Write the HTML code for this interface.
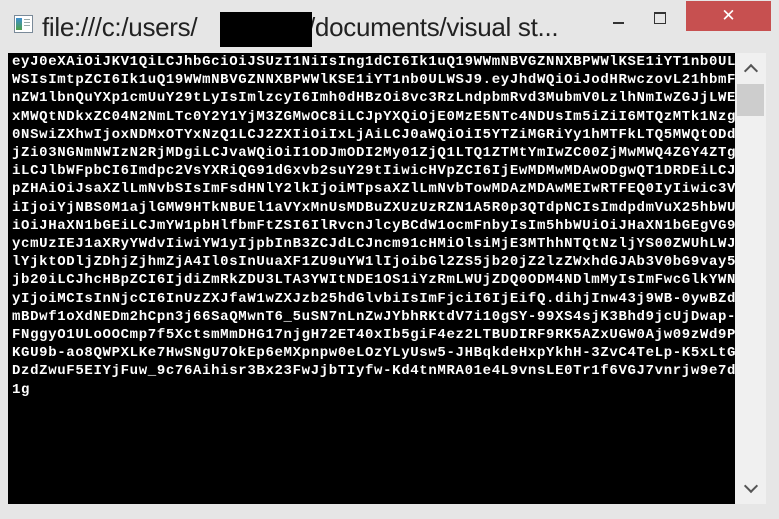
<!DOCTYPE html>
<html><head><meta charset="utf-8"><style>
html,body{margin:0;padding:0;}
body{width:779px;height:519px;background:#e6e6e6;position:relative;overflow:hidden;font-family:"Liberation Sans",sans-serif;}
.title{position:absolute;top:10px;font-size:26px;color:#222;white-space:nowrap;line-height:34px;}
.redact{position:absolute;left:220px;top:12px;width:92px;height:35px;background:#000;}
.icon{position:absolute;left:14px;top:15px;width:17px;height:16px;background:#fff;border:1px solid #7a8a99;}
.icon:before{content:"";position:absolute;left:1px;top:2px;width:6px;height:12px;background:linear-gradient(#3f8fd0,#4da04a);}
.icon:after{content:"";position:absolute;left:9px;top:3px;width:6px;height:9px;background:repeating-linear-gradient(#9aa 0 1px,transparent 1px 3px);}
.min{position:absolute;left:613px;top:22px;width:11px;height:2px;background:#333;}
.max{position:absolute;left:654px;top:12px;width:10px;height:9px;border:1.5px solid #333;border-top-width:2px;}
.close{position:absolute;left:686px;top:1px;width:85px;height:30px;background:#c75050;color:#fff;font-size:17px;text-align:center;line-height:30px;}
.con{position:absolute;left:8px;top:53px;width:727px;height:451px;background:#000;overflow:hidden;}
pre{margin:0;padding:0 0 0 4px;font-family:"Liberation Mono",monospace;font-weight:bold;font-size:14px;letter-spacing:0.65px;line-height:18.2px;color:#fff;}
.sb{position:absolute;left:735px;top:53px;width:31px;height:451px;background:#f0f0f0;}
.thumb{position:absolute;left:2px;top:31px;width:27px;height:32px;background:#cdcdcd;}
.ar{position:absolute;left:11px;width:8px;height:8px;border-left:2.5px solid #555;border-top:2.5px solid #555;}
</style></head><body>
<div class="icon"></div>
<div class="title" style="left:42px;letter-spacing:-0.3px">file:///c:/users/</div>
<div class="title" style="left:308px;letter-spacing:-0.3px">/documents/visual st...</div>
<div class="redact"></div>
<div class="min"></div>
<div class="max"></div>
<div class="close">✕</div>
<div class="con"><pre>eyJ0eXAiOiJKV1QiLCJhbGciOiJSUzI1NiIsIng1dCI6Ik1uQ19WWmNBVGZNNXBPWWlKSE1iYT1nb0UL
WSIsImtpZCI6Ik1uQ19WWmNBVGZNNXBPWWlKSE1iYT1nb0ULWSJ9.eyJhdWQiOiJodHRwczovL21hbmF
nZW1lbnQuYXp1cmUuY29tLyIsImlzcyI6Imh0dHBzOi8vc3RzLndpbmRvd3MubmV0LzlhNmIwZGJjLWE
xMWQtNDkxZC04N2NmLTc0Y2Y1YjM3ZGMwOC8iLCJpYXQiOjE0MzE5NTc4NDUsIm5iZiI6MTQzMTk1Nzg
0NSwiZXhwIjoxNDMxOTYxNzQ1LCJ2ZXIiOiIxLjAiLCJ0aWQiOiI5YTZiMGRiYy1hMTFkLTQ5MWQtODd
jZi03NGNmNWIzN2RjMDgiLCJvaWQiOiI1ODJmODI2My01ZjQ1LTQ1ZTMtYmIwZC00ZjMwMWQ4ZGY4ZTg
iLCJlbWFpbCI6Imdpc2VsYXRiQG91dGxvb2suY29tIiwicHVpZCI6IjEwMDMwMDAwODgwQT1DRDEiLCJ
pZHAiOiJsaXZlLmNvbSIsImFsdHNlY2lkIjoiMTpsaXZlLmNvbTowMDAzMDAwMEIwRTFEQ0IyIiwic3V
iIjoiYjNBS0M1ajlGMW9HTkNBUEl1aVYxMnUsMDBuZXUzUzRZN1A5R0p3QTdpNCIsImdpdmVuX25hbWU
iOiJHaXN1bGEiLCJmYW1pbHlfbmFtZSI6IlRvcnJlcyBCdW1ocmFnbyIsIm5hbWUiOiJHaXN1bGEgVG9
ycmUzIEJ1aXRyYWdvIiwiYW1yIjpbInB3ZCJdLCJncm91cHMiOlsiMjE3MThhNTQtNzljYS00ZWUhLWJ
lYjktODljZDhjZjhmZjA4Il0sInUuaXF1ZU9uYW1lIjoibGl2ZS5jb20jZ2lzZWxhdGJAb3V0bG9vay5
jb20iLCJhcHBpZCI6IjdiZmRkZDU3LTA3YWItNDE1OS1iYzRmLWUjZDQ0ODM4NDlmMyIsImFwcGlkYWN
yIjoiMCIsInNjcCI6InUzZXJfaW1wZXJzb25hdGlvbiIsImFjciI6IjEifQ.dihjInw43j9WB-0ywBZd
mBDwf1oXdNEDm2hCpn3j66SaQMwnT6_5uSN7nLnZwJYbhRKtdV7i10gSY-99XS4sjK3Bhd9jcUjDwap-
FNggyO1ULoOOCmp7f5XctsmMmDHG17njgH72ET40xIb5giF4ez2LTBUDIRF9RK5AZxUGW0Ajw09zWd9P
KGU9b-ao8QWPXLKe7HwSNgU7OkEp6eMXpnpw0eLOzYLyUsw5-JHBqkdeHxpYkhH-3ZvC4TeLp-K5xLtG
DzdZwuF5EIYjFuw_9c76Aihisr3Bx23FwJjbTIyfw-Kd4tnMRA01e4L9vnsLE0Tr1f6VGJ7vnrjw9e7d
1g</pre></div>
<div class="sb"><div class="ar" style="top:13px;transform:rotate(45deg)"></div><div class="thumb"></div><div class="ar" style="top:428px;transform:rotate(225deg)"></div></div>
</body></html>
